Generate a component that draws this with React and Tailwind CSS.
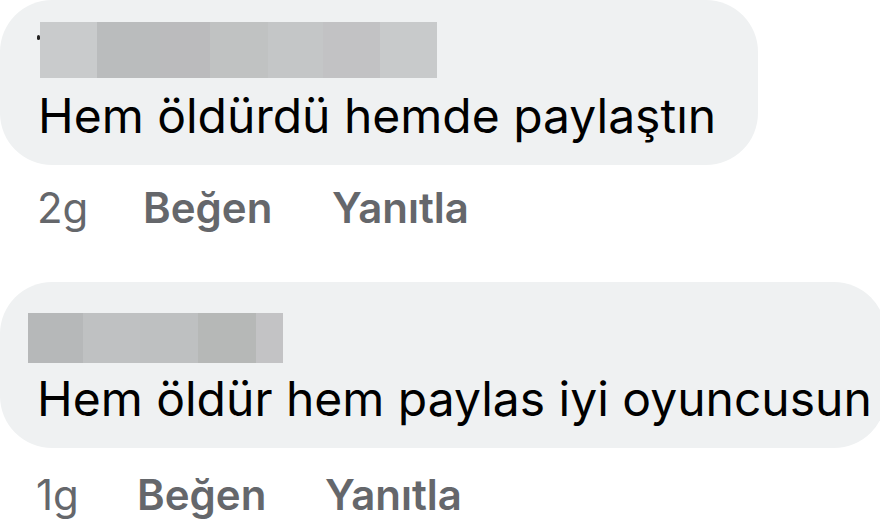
const nameOne = [
  { w: 57, c: "bg-[#c9cbcc]" },
  { w: 63, c: "bg-[#babcbd]" },
  { w: 50, c: "bg-[#bbbbbd]" },
  { w: 58, c: "bg-[#c0c2c2]" },
  { w: 55, c: "bg-[#c4c6c7]" },
  { w: 57, c: "bg-[#c2c2c4]" },
  { w: 57, c: "bg-[#c8cacb]" },
];

const nameTwo = [
  { w: 55, c: "bg-[#b6b8b9]" },
  { w: 57, c: "bg-[#bfc1c2]" },
  { w: 58, c: "bg-[#bec0c1]" },
  { w: 58, c: "bg-[#b6b8b7]" },
  { w: 27, c: "bg-[#c3c3c5]" },
];

const BlurredName = ({ parts, height }) => (
  <div className="flex" style={{ height }}>
    {parts.map((p, i) => (
      <div key={i} className={p.c} style={{ width: p.w }} />
    ))}
  </div>
);

export default function App() {
  return (
    <div className="w-[880px] h-[530px] overflow-hidden bg-white font-['Inter',sans-serif] text-black">
      <div className="w-[758px] h-[165px] rounded-[52px] bg-[#eff1f2] pl-[40px] pt-[22px]">
        <div className="relative">
          <span className="absolute left-[-3px] top-[13px] w-[3px] h-[5px] rounded-full bg-[#222]" />
          <BlurredName parts={nameOne} height={56} />
        </div>
        <p className="mt-[14px] -ml-[2px] text-[48px] leading-[48px] whitespace-nowrap">
          Hem öldürdü hemde paylaştın
        </p>
      </div>
      <div className="mt-[23px] flex items-center text-[42px] leading-[40px] text-[#65676b] pl-[37px]">
        <span className="w-[106px]">2g</span>
        <span className="font-semibold w-[189px]">Beğen</span>
        <span className="font-semibold">Yanıtla</span>
      </div>

      <div className="mt-[54px] w-[886px] h-[166px] rounded-[52px] bg-[#eff1f2] pl-[28px] pt-[31px]">
        <BlurredName parts={nameTwo} height={50} />
        <p className="mt-[12px] ml-[9px] text-[48px] leading-[48px] whitespace-nowrap">
          Hem öldür hem paylas iyi oyuncusun
        </p>
      </div>
      <div className="mt-[27px] flex items-center text-[42px] leading-[40px] text-[#65676b] pl-[36px]">
        <span className="w-[101px]">1g</span>
        <span className="font-semibold w-[188px]">Beğen</span>
        <span className="font-semibold">Yanıtla</span>
      </div>
    </div>
  );
}
